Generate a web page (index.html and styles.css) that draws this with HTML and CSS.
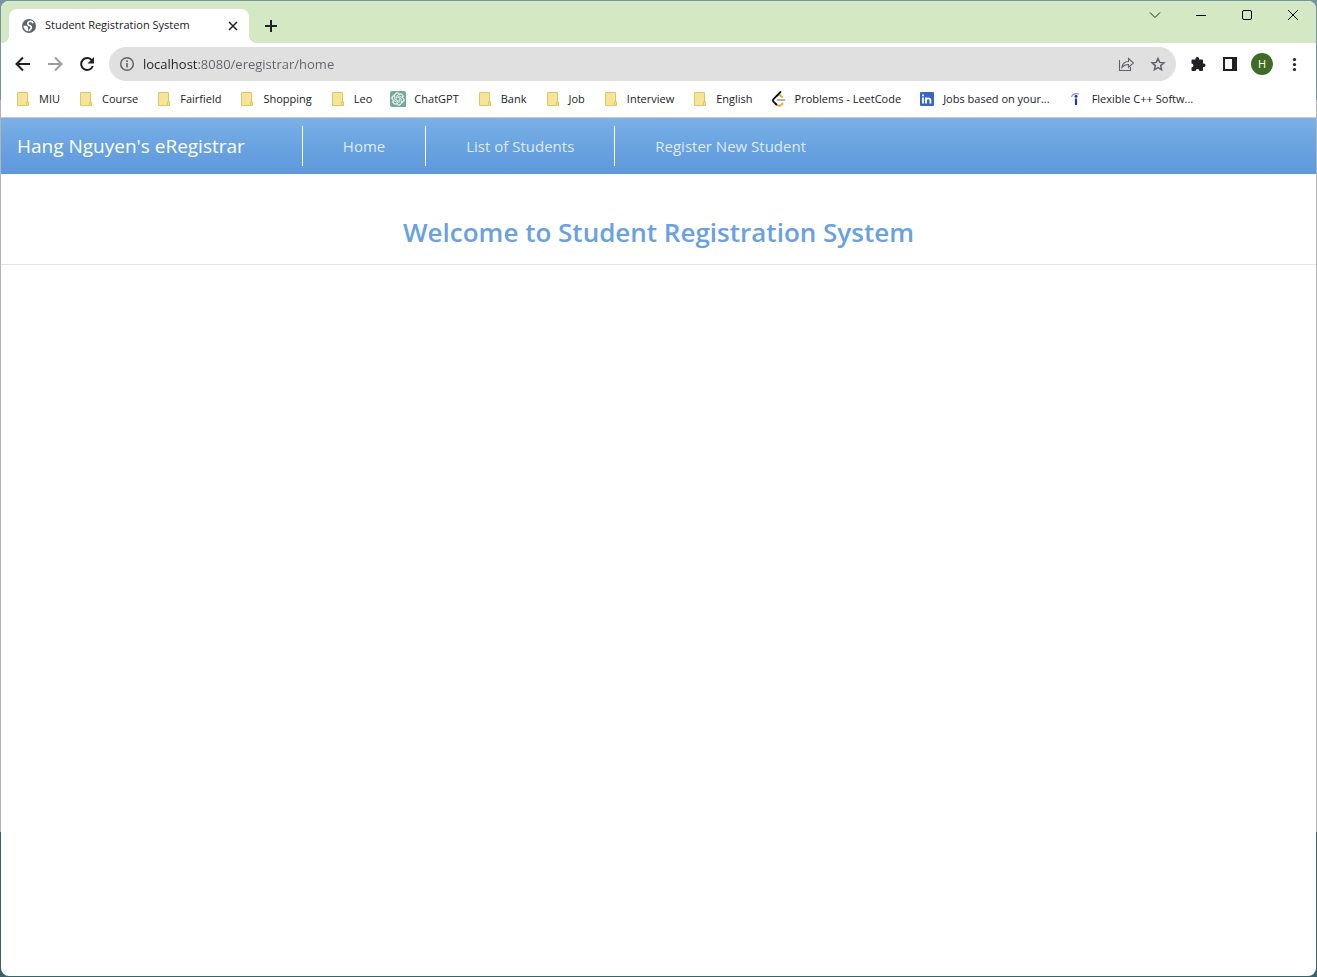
FILE: index.html
```html
<!DOCTYPE html>
<html lang="en">
<head>
<meta charset="utf-8">
<title>Student Registration System</title>
<link rel="stylesheet" href="styles.css">
</head>
<body>
<svg class="defs" aria-hidden="true">
  <symbol id="folder" viewBox="0 0 16 16">
    <path d="M2.5 1.5h10v9.500h1v3.500h-11z" fill="#f7e49b" stroke="#dfc663"/>
    <path d="M11.500 14.500v-3.500h2v3.500z" fill="#f7e49b" stroke="#dfc663"/>
  </symbol>
</svg>
<div class="window">
  <header class="tabstrip">
    <div class="tab">
      <svg class="icon16" viewBox="0 0 16 16"><circle cx="8" cy="8" r="7" fill="#5f6368"/><path d="M12 5.200Q11.500 3.300 9.300 3.300 6.800 3.700 6.800 5.500T9.300 7.800Q11 9 9.800 10.800T7.500 12.800" fill="none" stroke="#fff" stroke-width="1.600"/><path d="M2.400 7.800h3.200l1.400 1.500v3.500l-1 .4Q2.500 11.500 2.400 7.800z" fill="#fff"/></svg>
      <span class="tab-title">Student Registration System</span>
      <button class="plain" aria-label="Close tab"><svg class="icon16" viewBox="0 0 16 16"><path d="M4 4l8 8M12 4l-8 8" stroke="#202124" stroke-width="1.500"/></svg></button>
    </div>
    <button class="plain new-tab" aria-label="New tab"><svg class="icon16" viewBox="0 0 16 16"><path d="M8 2v12M2 8h12" stroke="#202124" stroke-width="2"/></svg></button>
    <div class="controls">
      <button class="plain" aria-label="Search tabs"><svg class="icon16" viewBox="0 0 16 16"><path d="M3 5.500l5 5 5-5" fill="none" stroke="#222"/></svg></button>
      <button class="plain" aria-label="Minimize"><svg class="icon16" viewBox="0 0 16 16"><path d="M3 8.500h10" stroke="#000"/></svg></button>
      <button class="plain" aria-label="Maximize"><svg class="icon16" viewBox="0 0 16 16"><rect x="3.500" y="3.500" width="9" height="9" rx="1.500" fill="none" stroke="#000"/></svg></button>
      <button class="plain" aria-label="Close"><svg class="icon16" viewBox="0 0 16 16"><path d="M3 3l10 10M13 3L3 13" stroke="#000"/></svg></button>
    </div>
  </header>
  <div class="toolbar">
    <button class="plain" aria-label="Back"><svg class="icon16" viewBox="0 0 16 16"><path d="M15 8H2M8 1.500L1.500 8 8 14.500" fill="none" stroke="#202124" stroke-width="2"/></svg></button>
    <button class="plain" aria-label="Forward"><svg class="icon16" viewBox="0 0 16 16"><path d="M1 8h13M8 1.500L14.500 8 8 14.500" fill="none" stroke="#9a9c9e" stroke-width="2"/></svg></button>
    <button class="plain" aria-label="Reload"><svg class="icon16" viewBox="0 0 16 16"><path d="M13 4.500A6 6 0 1 0 13.800 10" fill="none" stroke="#202124" stroke-width="2"/><path d="M15 1v6.500H8.500z" fill="#202124"/></svg></button>
    <div class="omnibox">
      <button class="plain" aria-label="View site information"><svg class="icon16" viewBox="0 0 16 16"><circle cx="8" cy="8" r="6.300" fill="none" stroke="#5f6368" stroke-width="1.500"/><path d="M8 7v4.500M8 4.300v1.600" stroke="#5f6368" stroke-width="1.600"/></svg></button>
      <input class="url" aria-label="Address" value="localhost:8080/eregistrar/home">
      <button class="plain" aria-label="Share"><svg class="icon16" viewBox="0 0 16 16"><path d="M1.500 4v10.500h11V11M4 11.500C4.500 7.500 7 5.500 10.500 5.500v-3L15.500 7l-5 4.300V8.500C7.500 8.500 5.500 9.500 4 11.500z" fill="none" stroke="#5f6368" stroke-width="1.100"/></svg></button>
      <button class="plain" aria-label="Bookmark this tab"><svg class="icon16" viewBox="0 0 16 16"><path d="M8 2.500l1.700 3.900 4.200.4-3.200 2.800.9 4.200L8 11.600l-3.600 2.200.9-4.200-3.200-2.800 4.200-.4z" fill="none" stroke="#5f6368" stroke-width="1.500"/></svg></button>
    </div>
    <button class="plain" aria-label="Extensions"><svg class="icon16" viewBox="0 0 16 16"><path d="M1.500 4.500q0-1 1-1h3a1.900 1.900 0 1 1 3.600 0H12q1 0 1 1v3a1.900 1.900 0 1 1 0 3.600V14q0 1-1 1H9.400a1.900 1.900 0 0 0-3.800 0H2.500q-1 0-1-1v-2.700a1.900 1.900 0 0 0 0-3.800z" fill="#202124"/></svg></button>
    <button class="plain" aria-label="Side panel"><svg class="icon16" viewBox="0 0 16 16"><path d="M1 1h14v14H1zM3 3v10h7V3z" fill="#202124" fill-rule="evenodd"/></svg></button>
    <button class="plain avatar" aria-label="Profile H">H</button>
    <button class="plain" aria-label="Menu"><svg class="icon16" viewBox="0 0 16 16"><g fill="#202124"><circle cx="8.500" cy="3.500" r="1.600"/><circle cx="8.500" cy="8.500" r="1.600"/><circle cx="8.500" cy="13.500" r="1.600"/></g></svg></button>
  </div>
  <nav class="bookmarks" aria-label="Bookmarks">
    <button class="plain bm"><svg class="icon16"><use href="#folder"/></svg>MIU</button>
    <button class="plain bm"><svg class="icon16"><use href="#folder"/></svg>Course</button>
    <button class="plain bm"><svg class="icon16"><use href="#folder"/></svg>Fairfield</button>
    <button class="plain bm"><svg class="icon16"><use href="#folder"/></svg>Shopping</button>
    <button class="plain bm"><svg class="icon16"><use href="#folder"/></svg>Leo</button>
    <a class="bm" href="#"><svg class="icon16" viewBox="0 0 16 16"><path d="M2 0h12a2 2 0 0 1 2 2v14H2a2 2 0 0 1-2-2V2a2 2 0 0 1 2-2z" fill="#75a99c"/><g fill="none" stroke="#eef6f3" stroke-width=".8"><path id="petal" d="M6.200 9V5.200l3.300-1.900a2.600 2.600 0 0 1 3.900 2.900M4.300 5.200a2.600 2.600 0 0 1 4.600-1.900"/><use href="#petal" transform="rotate(60 8 8)"/><use href="#petal" transform="rotate(120 8 8)"/><use href="#petal" transform="rotate(180 8 8)"/><use href="#petal" transform="rotate(240 8 8)"/><use href="#petal" transform="rotate(300 8 8)"/></g></svg>ChatGPT</a>
    <button class="plain bm"><svg class="icon16"><use href="#folder"/></svg>Bank</button>
    <button class="plain bm"><svg class="icon16"><use href="#folder"/></svg>Job</button>
    <button class="plain bm"><svg class="icon16"><use href="#folder"/></svg>Interview</button>
    <button class="plain bm"><svg class="icon16"><use href="#folder"/></svg>English</button>
    <a class="bm" href="#"><svg class="icon16" viewBox="0 0 16 16"><g fill="none" stroke-linecap="round" stroke-width="1.800"><path d="M6.500 9h7" stroke="#b3b3b3"/><path d="M6 5q2-1.700 4 0l1.300 1M5.500 13.500q2.500 2.300 4.700.3l1.300-1.300" stroke="#f0a52f"/><path d="M9.500 1L2.500 8Q1.300 9.300 2.500 10.700L5.300 13.500" stroke="#111"/></g></svg>Problems - LeetCode</a>
    <a class="bm" href="#"><svg class="icon16" viewBox="0 0 16 16"><rect x="1" y="1" width="14" height="14" rx="1" fill="#3767c4"/><path d="M4 6.500v6M4 3.500v1.700M7 6.500v6M7 9.500q0-2.200 2.200-2.200t2.200 2.200v3" fill="none" stroke="#fff" stroke-width="1.800"/></svg>Jobs based on your...</a>
    <a class="bm" href="#"><svg class="icon16" viewBox="0 0 16 16"><path d="M3.500 6Q5 1.500 11 3" fill="none" stroke="#7d91ce" stroke-width="1.200"/><circle cx="8" cy="5.300" r="1.500" fill="#2438a0"/><path d="M8 7.500V14" stroke="#2438a0" stroke-width="2.200"/></svg>Flexible C++ Softw...</a>
  </nav>
  <nav class="navbar" aria-label="Main">
    <a class="brand" href="#">Hang Nguyen's eRegistrar</a>
    <a class="nav-link" href="#">Home</a>
    <a class="nav-link" href="#">List of Students</a>
    <a class="nav-link" href="#">Register New Student</a>
  </nav>
  <main>
    <h1>Welcome to Student Registration System</h1>
  </main>
</div>
</body>
</html>
```
FILE: styles.css
```css
* { box-sizing: border-box; }
body {
  margin: 0;
  min-height: 100vh;
  padding: 1px;
  display: flex;
  background: linear-gradient(#7394a3 0, #7394a3 100px, #b4b4b4 100px, #b4b4b4 832px, #3a626b 832px);
  font-family: "Open Sans", "Noto Sans", sans-serif;
  font-size: 11px;
  color: #202124;
}
.defs { position: absolute; width: 0; height: 0; }
.window {
  flex: 1;
  min-width: 0;
  display: flex;
  flex-direction: column;
  background: #fff;
  border-radius: 8px;
  overflow: hidden;
}
.icon16 { width: 16px; height: 16px; display: block; flex: none; }
.plain {
  border: 0;
  padding: 0;
  background: none;
  font: inherit;
  color: inherit;
  flex: none;
}
.tabstrip {
  height: 42px;
  padding: 8px 15px 0 8px;
  display: flex;
  background: #d3e8c3;
}
.tab {
  width: 240px;
  padding: 0 8px 0 12px;
  display: flex;
  align-items: center;
  gap: 8px;
  background: #fff;
  border-radius: 8px 8px 0 0;
  position: relative;
}
.tab::before, .tab::after {
  content: "";
  position: absolute;
  bottom: 0;
  width: 8px;
  height: 8px;
}
.tab::before { right: 100%; background: radial-gradient(circle at 0 0, transparent 8px, #fff 8px); }
.tab::after { left: 100%; background: radial-gradient(circle at 100% 0, transparent 8px, #fff 8px); }
.tab-title { flex: 1; white-space: nowrap; line-height: 16px; padding-bottom: 2px; }
.new-tab { margin-left: 14px; }
.controls { margin-left: auto; display: flex; gap: 30px; height: 12px; align-items: center; }
.toolbar {
  height: 42px;
  padding: 0 14px;
  display: flex;
  align-items: center;
  gap: 16px;
}
.omnibox {
  flex: 1;
  min-width: 0;
  height: 34px;
  margin-right: -2px;
  margin-left: -2px;
  padding: 0 10px;
  display: flex;
  align-items: center;
  gap: 16px;
  background: #e0e0e0;
  border-radius: 17px;
}
.url {
  flex: 1;
  min-width: 0;
  margin-left: -8px;
  border: 0;
  padding: 0;
  outline: 0;
  font: 13px/20px "Open Sans", "Noto Sans", sans-serif;
  color: transparent;
  background: linear-gradient(to right, #202124 55px, #5f6368 55px);
  -webkit-background-clip: text;
  background-clip: text;
}
.avatar {
  width: 22px;
  height: 22px;
  margin: 0 -3px;
  border-radius: 50%;
  background: #3f6b26;
  color: #fff;
  line-height: 22px;
  text-align: center;
}
.bookmarks {
  height: 33px;
  padding: 0 14px 5px;
  display: flex;
  align-items: center;
  gap: 18px;
  border-bottom: 1px solid #c8cacc;
}
.bm {
  display: flex;
  align-items: center;
  gap: 8px;
  flex: none;
  white-space: nowrap;
  color: inherit;
  text-decoration: none;
}
.navbar {
  padding: 8px 16px;
  display: flex;
  align-items: center;
  background: linear-gradient(#7bb1e6, #69a3e1 50%, #5f98dc);
}
.brand {
  margin-right: 57px;
  font-size: 19px;
  line-height: 40px;
  color: #fff;
  text-decoration: none;
}
.nav-link {
  padding: 0 40px;
  border-left: 1px solid #fff;
  font-size: 15px;
  line-height: 40px;
  color: #deebf9;
  text-decoration: none;
}
h1 {
  margin: 40px 0 0;
  padding-bottom: 13px;
  border-bottom: 1px solid #e2e4e6;
  font-size: 26px;
  line-height: 37px;
  font-weight: 600;
  text-align: center;
  color: #69a1e1;
}
```
